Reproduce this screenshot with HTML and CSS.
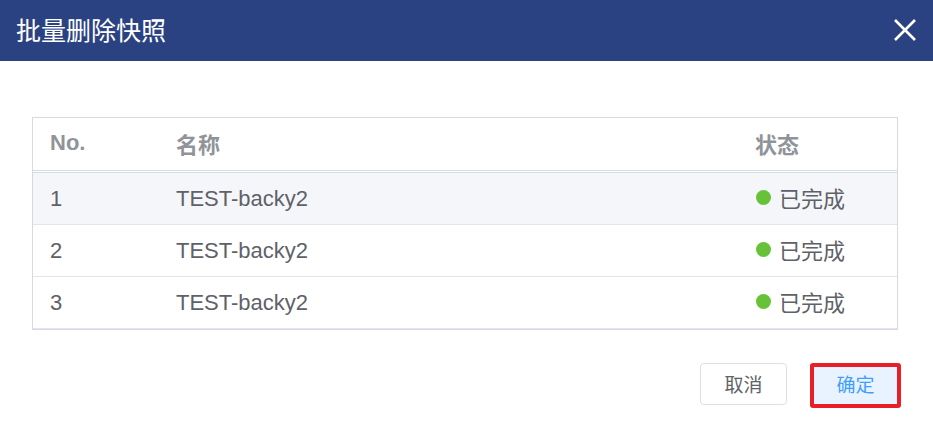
FILE: index.html
```html
<!DOCTYPE html>
<html lang="zh-CN">
<head>
<meta charset="utf-8">
<title>批量删除快照</title>
<link rel="stylesheet" href="styles.css">
</head>
<body>
<div class="dialog">
  <div class="header">
    <span class="title">批量删除快照</span>
    <svg class="close" width="24" height="24" viewBox="0 0 24 24">
      <path d="M2 2 L22 22 M22 2 L2 22" stroke="#fff" stroke-width="2.6" fill="none"/>
    </svg>
  </div>
  <div class="content">
    <div class="table">
      <div class="row head">
        <div class="cell">No.</div>
        <div class="cell">名称</div>
        <div class="cell">状态</div>
      </div>
      <div class="row striped">
        <div class="cell">1</div>
        <div class="cell">TEST-backy2</div>
        <div class="cell status"><span class="dot"></span><span class="label">已完成</span></div>
      </div>
      <div class="row">
        <div class="cell">2</div>
        <div class="cell">TEST-backy2</div>
        <div class="cell status"><span class="dot"></span><span class="label">已完成</span></div>
      </div>
      <div class="row">
        <div class="cell">3</div>
        <div class="cell">TEST-backy2</div>
        <div class="cell status"><span class="dot"></span><span class="label">已完成</span></div>
      </div>
    </div>
  </div>
  <div class="footer">
    <button class="btn cancel">取消</button>
    <button class="btn ok">确定</button>
  </div>
</div>
</body>
</html>
```

FILE: styles.css
```css
html, body {
  margin: 0;
  padding: 0;
  background: #fff;
}
body {
  font-family: "Liberation Sans", "Noto Sans CJK SC", sans-serif;
  width: 933px;
  height: 433px;
  overflow: hidden;
}
.header {
  height: 61px;
  background: #2b4282;
  display: flex;
  align-items: center;
  justify-content: space-between;
  padding: 0 16px 0 16px;
}
.title {
  color: #fff;
  font-size: 25px;
  font-family: "Noto Sans CJK SC", sans-serif;
  line-height: 1;
  margin-top: -2px;
}
.close {
  margin-top: -2px;
}
.content {
  padding: 56px 35px 0 32px;
}
.table {
  border: 1px solid #d5d9e1;
}
.row {
  display: grid;
  grid-template-columns: 126px 579px 1fr;
  height: 51px;
  border-bottom: 1px solid #e2e5ec;
  align-items: center;
  color: #5f6168;
  font-size: 22px;
}
.row.head {
  height: 52px;
  border-bottom: 3px double #d6dae2;
  color: #909399;
  font-weight: bold;
}
.row.striped {
  background: #f5f6fa;
}
.cell {
  padding-left: 17px;
  display: flex;
  align-items: center;
}
.row.head .cell {
  margin-top: -3px;
}
.label {
  font-family: "Noto Sans CJK SC", sans-serif;
  line-height: 1;
  margin-top: -3px;
}
.dot {
  display: inline-block;
  width: 15px;
  height: 15px;
  border-radius: 50%;
  background: #67c23a;
  margin-right: 8px;
  margin-left: 1px;
  margin-top: -2px;
}
.footer {
  display: flex;
  justify-content: flex-end;
  align-items: flex-start;
  gap: 23px;
  padding: 33px 32px 0 0;
}
.btn {
  font-family: "Noto Sans CJK SC", sans-serif;
  font-size: 19px;
  border-radius: 4px;
  cursor: pointer;
  line-height: 1;
  padding: 0 0 2px 0;
}
.cancel {
  width: 87px;
  height: 42px;
  background: #fff;
  border: 1px solid #dcdfe6;
  color: #606266;
}
.ok {
  width: 91px;
  height: 45px;
  background: #e8f3ff;
  border: 4px solid #e81f29;
  border-radius: 3px;
  color: #409eff;
  padding-bottom: 4px;
}
```
